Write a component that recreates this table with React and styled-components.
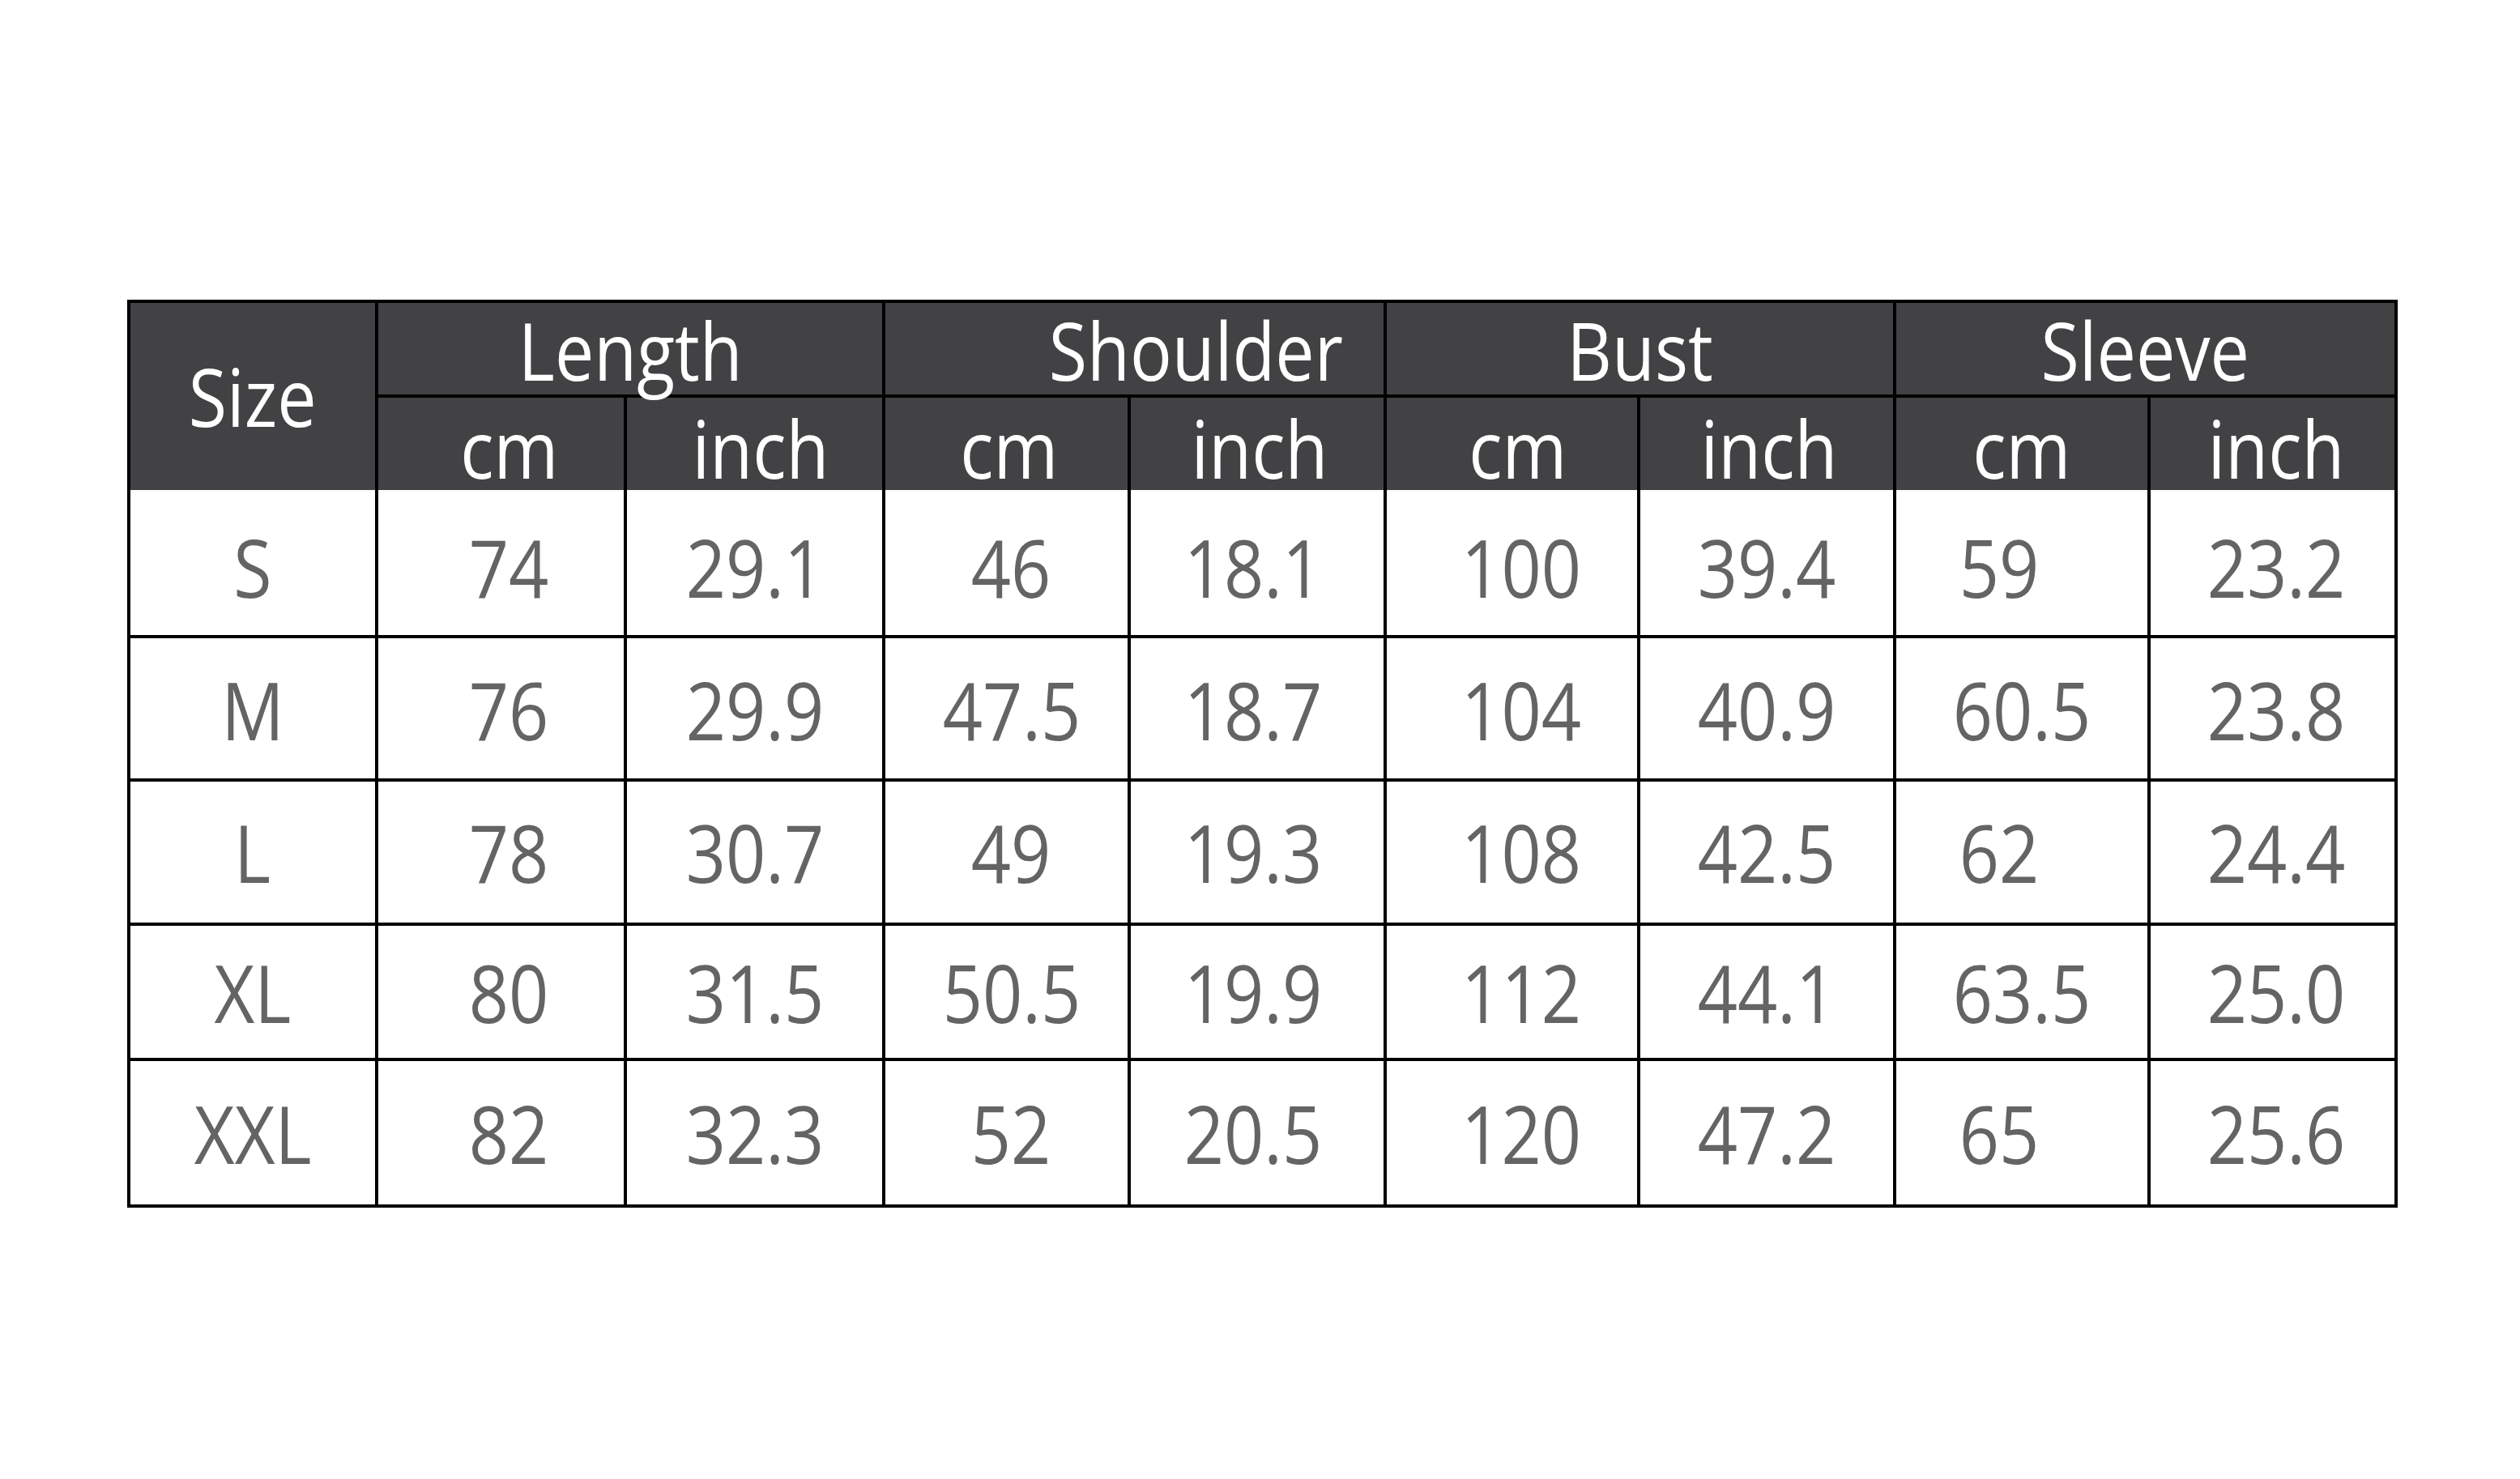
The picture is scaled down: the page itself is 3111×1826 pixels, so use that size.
import styled, { createGlobalStyle } from 'styled-components';

const GlobalStyle = createGlobalStyle`
  html, body {
    margin: 0;
    padding: 0;
    background: #ffffff;
  }
  body {
    font-family: "Open Sans", "Noto Sans", "Liberation Sans", sans-serif;
  }
`;

const Page = styled.div`
  width: 3111px;
  height: 1826px;
  box-sizing: border-box;
  padding: 370px 0 0 157px;
  background: #fff;
`;

const Chart = styled.div`
  display: grid;
  width: 2803px;
  box-sizing: border-box;
  border: 4px solid #000;
  grid-template-columns: 302px 307px 319px 303px 316px 313px 316px 314px 305px;
  grid-template-rows: 113px 118px 179px 177px 178px 167px 181px;
`;

const Cell = styled.div`
  box-sizing: border-box;
  display: flex;
  align-items: center;
  justify-content: center;
  white-space: nowrap;
  font-size: 98px;
  line-height: 1;
  border-left: ${(p) => (p.$first ? 'none' : '4px solid #000')};
  border-top: ${(p) => (p.$top ? '4px solid #000' : 'none')};
  padding-left: ${(p) => Math.max(0, 2 * (p.$dx || 0))}px;
  padding-right: ${(p) => Math.max(0, -2 * (p.$dx || 0))}px;
  padding-top: ${(p) => p.$dy || 0}px;
`;

const HeadCell = styled(Cell)`
  background: #424244;
  color: #ffffff;
  grid-column: ${(p) => p.$col};
  grid-row: ${(p) => p.$row};
`;

const BodyCell = styled(Cell)`
  background: #ffffff;
  color: #646464;
`;

const Label = styled.span`
  display: inline-block;
  line-height: 0.9;
  transform: scaleX(0.88);
`;

const groups = [
  { name: 'Length', dx: 0 },
  { name: 'Shoulder', dx: 76 },
  { name: 'Bust', dx: 0 },
  { name: 'Sleeve', dx: 0 },
];

const unitShift = [10, 7, 3, 3, 7, 3, 0, 4];

const colShift = [0, 10, 0, 6, -5, 12, 0, 0, 4];

const rows = [
  { dy: 12, cells: ['S', '74', '29.1', '46', '18.1', '100', '39.4', '59', '23.2'] },
  { dy: 4, cells: ['M', '76', '29.9', '47.5', '18.7', '104', '40.9', '60.5', '23.8'] },
  { dy: 0, cells: ['L', '78', '30.7', '49', '19.3', '108', '42.5', '62', '24.4'] },
  { dy: 2, cells: ['XL', '80', '31.5', '50.5', '19.9', '112', '44.1', '63.5', '25.0'] },
  { dy: 2, cells: ['XXL', '82', '32.3', '52', '20.5', '120', '47.2', '65', '25.6'] },
];

function shiftFor(col, value) {
  if (col === 7 && value.length === 2) return -28;
  return colShift[col];
}

function App() {
  return (
    <Page>
      <GlobalStyle />
      <Chart>
        <HeadCell $first $col="1" $row="1 / span 2">
          <Label>Size</Label>
        </HeadCell>
        {groups.map((g, i) => (
          <HeadCell key={g.name} $col={`${2 + i * 2} / span 2`} $row="1" $dx={g.dx} $dy={4}>
            <Label>{g.name}</Label>
          </HeadCell>
        ))}
        {unitShift.map((dx, i) => (
          <HeadCell key={i} $top $col={`${2 + i}`} $row="2" $dx={dx} $dy={10}>
            <Label>{i % 2 === 0 ? 'cm' : 'inch'}</Label>
          </HeadCell>
        ))}
        {rows.map((row, r) =>
          row.cells.map((value, c) => (
            <BodyCell
              key={`${r}-${c}`}
              $first={c === 0}
              $top={r > 0}
              $dx={shiftFor(c, value)}
              $dy={row.dy}
            >
              <Label>{value}</Label>
            </BodyCell>
          ))
        )}
      </Chart>
    </Page>
  );
}

export default App;
